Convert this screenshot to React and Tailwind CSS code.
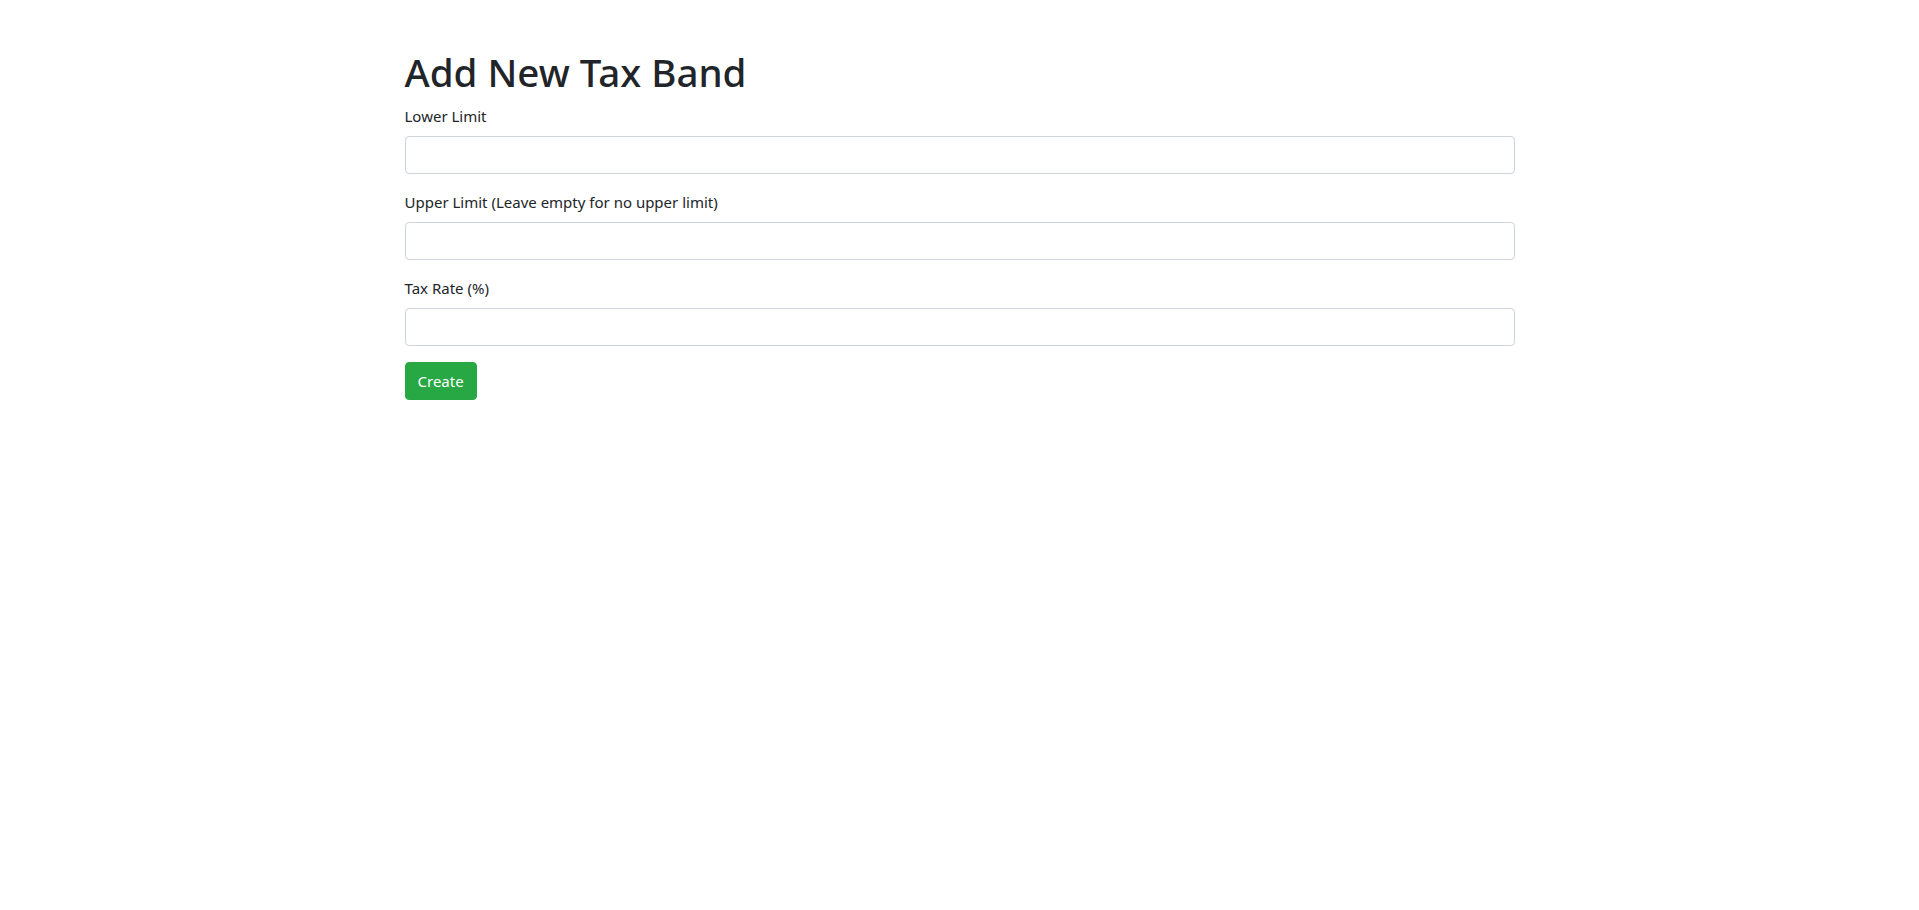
export default function App() {
  const font = { fontFamily: '"Noto Sans", "Open Sans", sans-serif' };
  return (
    <div className="min-h-[910px] bg-white text-[#212529]" style={font}>
      <div className="mx-auto w-[1140px] px-[15px] pt-12">
        <h1 className="mb-2 text-[38.5px] font-medium leading-[48px]">Add New Tax Band</h1>
        <form onSubmit={(e) => e.preventDefault()}>
          {[
            "Lower Limit",
            "Upper Limit (Leave empty for no upper limit)",
            "Tax Rate (%)",
          ].map((l) => (
            <div key={l} className="mb-4">
              <label className="mb-2 block text-[15px] leading-6">{l}</label>
              <input
                type="text"
                className="block h-[38px] w-full rounded-[4px] border border-[#ced4da] bg-white px-3 text-[16px] outline-none"
              />
            </div>
          ))}
          <button
            type="submit"
            className="h-[38px] rounded-[4px] border border-[#28a745] bg-[#28a745] px-3 text-[15px] leading-6 text-white"
          >
            Create
          </button>
        </form>
      </div>
    </div>
  );
}
